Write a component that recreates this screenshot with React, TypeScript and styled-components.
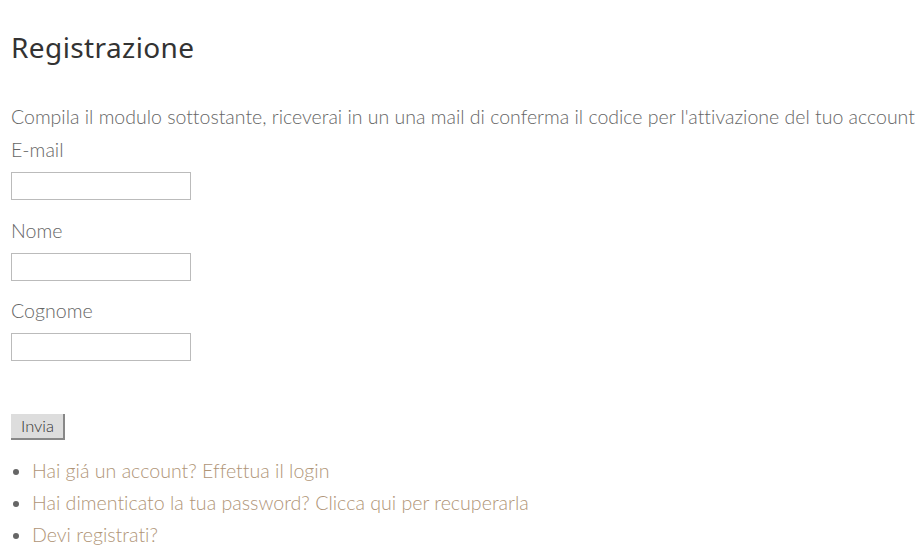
import * as React from 'react'
import styled, { createGlobalStyle } from 'styled-components'

const GlobalStyle = createGlobalStyle`
    body {
        margin: 0;
        background: #fff;
        font-family: Lato, "Liberation Sans", sans-serif;
        font-weight: 300;
        font-variant-ligatures: none;
        color: #666;
    }
`

const StyledPage = styled.div`
    padding: 0 11px;
`

const StyledTitle = styled.h1`
    margin: 0;
    padding-top: 30px;
    font-family: "Noto Sans", sans-serif;
    font-weight: 400;
    font-size: 28px;
    line-height: 34px;
    color: #333;
    letter-spacing: 0.4px;
`

const StyledIntro = styled.p`
    margin: 39px 0 0;
    font-size: 19.5px;
    line-height: 27px;
    white-space: nowrap;
`

const StyledForm = styled.form`
    display: flex;
    flex-direction: column;
    align-items: flex-start;
    margin-top: 6px;
`

const StyledField = styled.div`
    display: flex;
    flex-direction: column;
    align-items: flex-start;
    gap: 9px;
    margin-bottom: 16.5px;
`

const StyledLabel = styled.label`
    font-size: 19.6px;
    line-height: 27px;
`

const StyledInput = styled.input`
    box-sizing: border-box;
    width: 180px;
    height: 28px;
    margin: 0;
    border: 1px solid #bbb;
    background: #fff;
`

const StyledButton = styled.button`
    box-sizing: border-box;
    margin-top: 36px;
    width: 54px;
    height: 26px;
    padding: 0 0 0 1px;
    border: none;
    border-right: 2px solid #888;
    border-bottom: 2px solid #888;
    background: #ddd;
    font-family: Lato, sans-serif;
    font-weight: 300;
    font-size: 16.5px;
    color: #333;
`

const StyledLinks = styled.ul`
    margin: 15px 0 0;
    padding-left: 21px;
    font-size: 19.6px;
    line-height: 32px;
    color: #666;
`

const StyledLink = styled.a`
    color: #b09577;
    text-decoration: none;
`

const fields = ['E-mail', 'Nome', 'Cognome']

const links = [
    'Hai giá un account? Effettua il login',
    'Hai dimenticato la tua password? Clicca qui per recuperarla',
    'Devi registrati?',
]

const App = () => {
    return (
        <>
            <GlobalStyle />
            <StyledPage>
                <StyledTitle>Registrazione</StyledTitle>
                <StyledIntro>
                    Compila il modulo sottostante, riceverai in un una mail di conferma il codice per l'attivazione del tuo account
                </StyledIntro>
                <StyledForm onSubmit={(e) => e.preventDefault()}>
                    {fields.map((field) => (
                        <StyledField key={field}>
                            <StyledLabel>{field}</StyledLabel>
                            <StyledInput type="text" />
                        </StyledField>
                    ))}
                    <StyledButton type="submit">Invia</StyledButton>
                </StyledForm>
                <StyledLinks>
                    {links.map((link) => (
                        <li key={link}>
                            <StyledLink href="#">{link}</StyledLink>
                        </li>
                    ))}
                </StyledLinks>
            </StyledPage>
        </>
    )
}

export default App
